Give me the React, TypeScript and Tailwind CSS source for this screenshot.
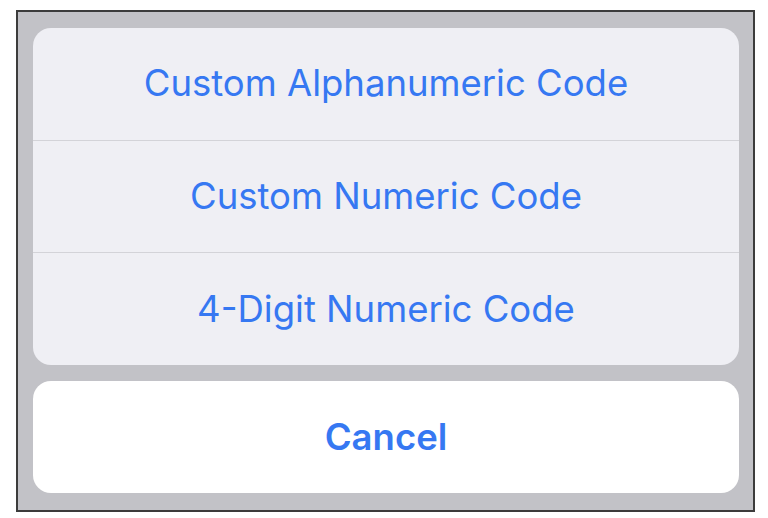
export default function App() {
  const options = ["Custom Alphanumeric Code", "Custom Numeric Code", "4-Digit Numeric Code"]

  return (
    <div className="w-[768px] h-[518px] bg-white pt-[10px] pl-[16px]" style={{ fontFamily: "Inter, 'Noto Sans', sans-serif" }}>
      <div className="w-[739px] h-[502px] border-2 border-[#3c3c3c] bg-[#c2c2c7] flex flex-col gap-4 pt-4 pl-[15px] pr-[14px]">
        {/* Options group */}
        <div className="h-[337px] rounded-[18px] bg-[#efeff4] flex flex-col overflow-hidden">
          {options.map((label, i) => (
            <div
              key={label}
              className={
                i === 0
                  ? "flex-1 flex items-center justify-center text-[36.5px] text-[#3678f2]"
                  : "flex-1 flex items-center justify-center text-[36.5px] text-[#3678f2] border-t border-[#d3d3d8]"
              }
            >
              {label}
            </div>
          ))}
        </div>

        {/* Cancel */}
        <div className="h-[112px] rounded-[18px] bg-white flex items-center justify-center text-[36.5px] font-semibold text-[#3678f2]">
          Cancel
        </div>
      </div>
    </div>
  )
}
